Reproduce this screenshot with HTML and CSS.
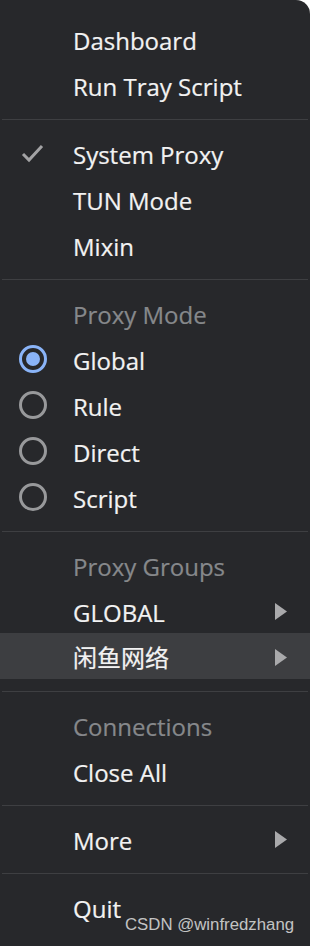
FILE: index.html
```html
<!DOCTYPE html>
<html>
<head>
<meta charset="utf-8">
<link rel="stylesheet" href="styles.css">
</head>
<body>
<div class="menu">
  <div class="item"><span class="ico"></span><span class="label">Dashboard</span></div>
  <div class="item"><span class="ico"></span><span class="label">Run Tray Script</span></div>
  <div class="sep"></div>
  <div class="item"><span class="ico"><svg width="24" height="20" viewBox="0 0 24 20"><polyline points="2,11 8,17 21,3" fill="none" stroke="#a3a3a5" stroke-width="3"/></svg></span><span class="label">System Proxy</span></div>
  <div class="item"><span class="ico"></span><span class="label">TUN Mode</span></div>
  <div class="item"><span class="ico"></span><span class="label">Mixin</span></div>
  <div class="sep"></div>
  <div class="item header"><span class="ico"></span><span class="label">Proxy Mode</span></div>
  <div class="item"><span class="ico"><span class="radio on"></span></span><span class="label">Global</span></div>
  <div class="item"><span class="ico"><span class="radio"></span></span><span class="label">Rule</span></div>
  <div class="item"><span class="ico"><span class="radio"></span></span><span class="label">Direct</span></div>
  <div class="item"><span class="ico"><span class="radio"></span></span><span class="label">Script</span></div>
  <div class="sep"></div>
  <div class="item header"><span class="ico"></span><span class="label">Proxy Groups</span></div>
  <div class="item"><span class="ico"></span><span class="label">GLOBAL</span><span class="arrow"><svg width="12" height="17" viewBox="0 0 12 17"><polygon points="0,0 12,8.5 0,17" fill="#a9a9ab"/></svg></span></div>
  <div class="item hover"><span class="ico"></span><span class="label cjk">闲鱼网络</span><span class="arrow"><svg width="12" height="17" viewBox="0 0 12 17"><polygon points="0,0 12,8.5 0,17" fill="#a9a9ab"/></svg></span></div>
  <div class="sep"></div>
  <div class="item header"><span class="ico"></span><span class="label">Connections</span></div>
  <div class="item"><span class="ico"></span><span class="label">Close All</span></div>
  <div class="sep"></div>
  <div class="item"><span class="ico"></span><span class="label">More</span><span class="arrow"><svg width="12" height="17" viewBox="0 0 12 17"><polygon points="0,0 12,8.5 0,17" fill="#a9a9ab"/></svg></span></div>
  <div class="sep"></div>
  <div class="item"><span class="ico"></span><span class="label">Quit</span></div>
  <div class="watermark">CSDN @winfredzhang</div>
</div>
</body>
</html>
```

FILE: styles.css
```css
html, body {
  margin: 0;
  padding: 0;
  background: #ffffff;
}
.menu {
  position: relative;
  width: 310px;
  height: 946px;
  box-sizing: border-box;
  padding-top: 15px;
  background: #27282b;
  border-top-right-radius: 14px;
  font-family: "Open Sans", "Noto Sans CJK SC", sans-serif;
  font-size: 24px;
  color: #f2f2f2;
  overflow: hidden;
}
.item {
  display: flex;
  align-items: center;
  height: 46px;
}
.item.hover {
  background: #3d3e41;
}
.item.header {
  color: #86888b;
}
.ico {
  width: 65px;
  flex: none;
  display: flex;
  justify-content: center;
  align-items: center;
  padding-top: 2px;
}
.label {
  flex: 1;
  line-height: 46px;
  padding-top: 3px;
  box-sizing: border-box;
  height: 46px;
  margin-left: 8px;
  white-space: nowrap;
  -webkit-text-stroke: 0.2px currentColor;
}
.label.cjk {
  font-family: "Noto Sans CJK SC", sans-serif;
  font-size: 24px;
  padding-top: 1px;
}
.arrow {
  width: 35px;
  flex: none;
  display: flex;
  align-items: center;
  padding-top: 2px;
}
.radio {
  width: 28px;
  height: 28px;
  box-sizing: border-box;
  border: 3px solid #98999b;
  border-radius: 50%;
  display: flex;
  justify-content: center;
  align-items: center;
}
.radio.on {
  border-color: #8ab4f8;
}
.radio.on::after {
  content: "";
  width: 14px;
  height: 14px;
  border-radius: 50%;
  background: #8ab4f8;
}
.sep {
  height: 1px;
  margin: 12px 2px 9px 2px;
  background: #3e3f42;
}
.watermark {
  position: absolute;
  left: 125px;
  top: 915px;
  font-family: "Liberation Sans", Arial, sans-serif;
  font-size: 16.8px;
  color: rgba(225, 225, 225, 0.85);
  white-space: nowrap;
}
```
